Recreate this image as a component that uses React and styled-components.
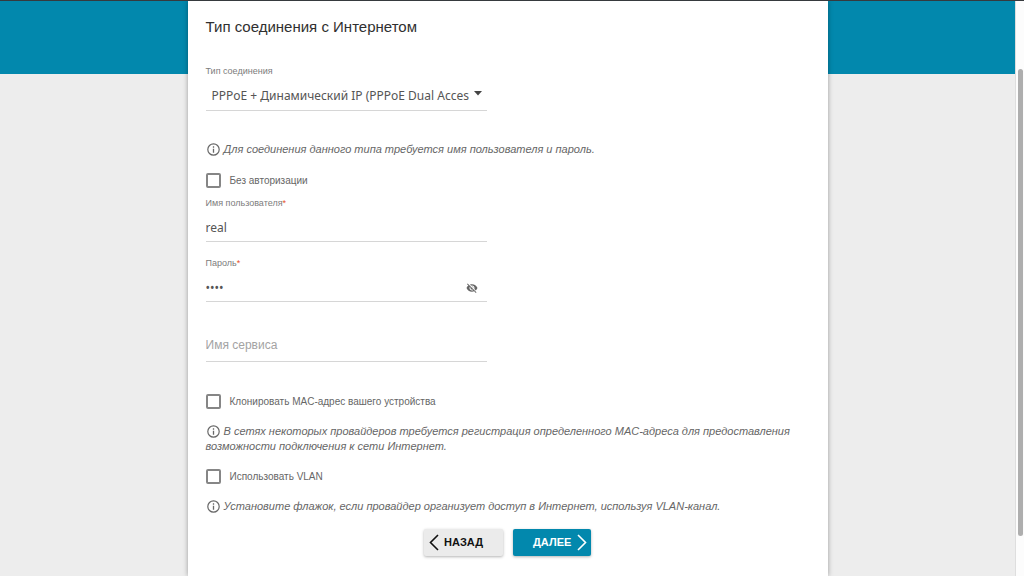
import React, { useState } from "react";
import styled, { createGlobalStyle } from "styled-components";

const teal = "#0288ad";
const sans = '"Liberation Sans", Arial, sans-serif';
const noto = '"Noto Sans", sans-serif';

const GlobalStyle = createGlobalStyle`
  *, *::before, *::after { box-sizing: border-box; }
  body { margin: 0; background: #ededed; font-family: ${sans}; color: #666; }
`;

const Shell = styled.div`
  display: flex;
  min-height: 100vh;
  border-top: 1px solid #363a3e;
`;

const Page = styled.div`
  flex: 1;
  min-width: 0;
  display: flex;
  flex-direction: column;
`;

const Banner = styled.header`
  height: 73px;
  background: ${teal};
`;

const Card = styled.main`
  flex: 1;
  width: 100%;
  max-width: 640px;
  margin: -73px auto 0;
  padding: 16px 18px 18px;
  background: #fff;
  box-shadow: 0 0 5px rgba(0, 0, 0, 0.35);
  clip-path: inset(0 -8px);
`;

const Track = styled.div`
  width: 9px;
  padding: 68px 1px 40px 2px;
  border-left: 1px solid #dedede;
  background: #fcfcfc;
  display: flex;
`;

const Thumb = styled.div`
  flex: 1;
  border-radius: 3px;
  background: #aeaeae;
`;

const Title = styled.h1`
  margin: 0 0 28px;
  font-size: 15px;
  line-height: 20px;
  font-weight: 400;
  color: #303030;
`;

const Field = styled.div`
  max-width: 281px;
  margin-top: ${(p) => p.$gap || 0}px;
`;

const Label = styled.label`
  display: block;
  height: 12px;
  font-size: 9px;
  line-height: 12px;
  color: #7c7c7c;
`;

const Required = styled.span`
  color: #e8502a;
`;

const Control = styled.div`
  display: flex;
  align-items: center;
  position: relative;
  height: ${(p) => (p.$tall ? 34 : 33)}px;
  padding-top: ${(p) => (p.$flush ? 0 : p.$tall ? 4 : 6)}px;
  border-bottom: 1px solid #d6d6d6;
`;

const Select = styled.select`
  appearance: none;
  width: 100%;
  height: 24px;
  padding: 0 18px 0 6px;
  border: 0;
  outline: 0;
  background: transparent;
  font: 12px/24px ${noto};
  color: #555;
`;

const Caret = styled.svg`
  position: absolute;
  right: 5px;
  top: 14px;
  pointer-events: none;
`;

const Input = styled.input`
  flex: 1;
  min-width: 0;
  height: 24px;
  padding: 0;
  border: 0;
  outline: 0;
  background: transparent;
  font: 12px/24px ${noto};
  color: #555;
  &::placeholder {
    font-family: ${sans};
    color: #a3a3a3;
    opacity: 1;
  }
`;

const EyeButton = styled.button`
  display: flex;
  margin: 0 9px 0 0;
  padding: 0;
  border: 0;
  background: none;
  color: #666;
`;

const Check = styled.label`
  display: flex;
  align-items: center;
  gap: 9px;
  margin-top: ${(p) => p.$gap || 15}px;
  font-size: 10px;
  line-height: 15px;
`;

const Box = styled.input`
  appearance: none;
  flex: none;
  width: 15px;
  height: 15px;
  margin: 0;
  border: 2px solid #868686;
  border-radius: 2px;
  background: #fff;
  &:checked { background: ${teal}; }
`;

const Hint = styled.p`
  margin: ${(p) => p.$gap || 15}px 0 0;
  font-size: 11px;
  line-height: 15px;
  font-style: italic;
`;

const InfoSvg = styled.svg`
  margin: 0 4px 0 1px;
  vertical-align: -3px;
`;

const Actions = styled.div`
  display: flex;
  justify-content: center;
  gap: 10px;
  margin-top: 15px;
`;

const Button = styled.button`
  display: flex;
  align-items: center;
  justify-content: space-between;
  width: ${(p) => (p.$primary ? 78 : 79)}px;
  height: 27px;
  padding: ${(p) => (p.$primary ? "0 4px 0 20px" : "0 20px 0 5px")};
  border: 0;
  border-radius: 2px;
  background: ${(p) => (p.$primary ? teal : "#ebebeb")};
  color: ${(p) => (p.$primary ? "#fff" : "#111")};
  box-shadow: 0 1px 3px rgba(0, 0, 0, 0.3);
  font: bold 11px/15px ${sans};
`;

const Info = () => (
  <InfoSvg width="13" height="13" viewBox="0 0 13 13" aria-hidden="true">
    <circle cx="6.5" cy="6.5" r="5.7" fill="none" stroke="#686868" strokeWidth="1.2" />
    <path d="M6.5 5.8v4M6.5 3.3v1.4" stroke="#686868" strokeWidth="1.3" />
  </InfoSvg>
);

const Chevron = ({ d }) => (
  <svg width="10" height="17" viewBox="0 0 10 17" fill="none" stroke="currentColor" strokeWidth="1.6" aria-hidden="true">
    <path d={d} />
  </svg>
);

const EyeOff = () => (
  <svg width="12" height="12" viewBox="0 0 24 24" fill="currentColor" aria-hidden="true">
    <path d="M12 7c2.76 0 5 2.24 5 5 0 .65-.13 1.26-.36 1.83l2.92 2.92c1.51-1.26 2.7-2.89 3.43-4.75-1.73-4.39-6-7.5-11-7.5-1.4 0-2.74.25-3.98.7l2.16 2.16C10.74 7.13 11.35 7 12 7zM2 4.27l2.28 2.28.46.46C3.08 8.3 1.78 10.02 1 12c1.73 4.39 6 7.5 11 7.5 1.55 0 3.03-.3 4.38-.84l.42.42L19.73 22 21 20.73 3.27 3 2 4.27zM7.53 9.8l1.55 1.55c-.05.21-.08.43-.08.65 0 1.66 1.34 3 3 3 .22 0 .44-.03.65-.08l1.55 1.55c-.67.33-1.41.53-2.2.53-2.76 0-5-2.24-5-5 0-.79.2-1.53.53-2.2zm4.31-.78l3.15 3.15.02-.16c0-1.66-1.34-3-3-3l-.17.01z" />
  </svg>
);

export default function App() {
  const [user, setUser] = useState("real");
  const [password, setPassword] = useState("real");
  const [visible, setVisible] = useState(false);

  return (
    <>
      <GlobalStyle />
      <Shell>
        <Page>
          <Banner />
          <Card>
            <Title>Тип соединения с Интернетом</Title>
            <Field>
              <Label htmlFor="type">Тип соединения</Label>
              <Control $tall>
                <Select id="type">
                  <option>PPPoE + Динамический IP (PPPoE Dual Access)</option>
                </Select>
                <Caret width="8" height="5" viewBox="0 0 8 5" aria-hidden="true">
                  <path d="M0 0h8L4 4.5z" fill="#444" />
                </Caret>
              </Control>
            </Field>
            <Hint $gap={31}>
              <Info />
              Для соединения данного типа требуется имя пользователя и пароль.
            </Hint>
            <Check $gap={16}>
              <Box type="checkbox" />
              Без авторизации
            </Check>
            <Field $gap={9}>
              <Label htmlFor="user">
                Имя пользователя<Required>*</Required>
              </Label>
              <Control>
                <Input id="user" value={user} onChange={(e) => setUser(e.target.value)} />
              </Control>
            </Field>
            <Field $gap={15}>
              <Label htmlFor="password">
                Пароль<Required>*</Required>
              </Label>
              <Control>
                <Input
                  id="password"
                  type={visible ? "text" : "password"}
                  value={password}
                  onChange={(e) => setPassword(e.target.value)}
                />
                <EyeButton type="button" aria-label="Показать пароль" onClick={() => setVisible(!visible)}>
                  <EyeOff />
                </EyeButton>
              </Control>
            </Field>
            <Field $gap={15}>
              <Label htmlFor="service" />
              <Control $flush>
                <Input id="service" aria-label="Имя сервиса" placeholder="Имя сервиса" />
              </Control>
            </Field>
            <Check $gap={32}>
              <Box type="checkbox" />
              Клонировать MAC-адрес вашего устройства
            </Check>
            <Hint>
              <Info />
              В сетях некоторых провайдеров требуется регистрация определенного MAC-адреса для предоставления
              возможности подключения к сети Интернет.
            </Hint>
            <Check>
              <Box type="checkbox" />
              Использовать VLAN
            </Check>
            <Hint>
              <Info />
              Установите флажок, если провайдер организует доступ в Интернет, используя VLAN-канал.
            </Hint>
            <Actions>
              <Button type="button">
                <Chevron d="M9 1L1.500 8.500L9 16" />
                НАЗАД
              </Button>
              <Button type="button" $primary>
                ДАЛЕЕ
                <Chevron d="M1 1L8.500 8.500L1 16" />
              </Button>
            </Actions>
          </Card>
        </Page>
        <Track>
          <Thumb />
        </Track>
      </Shell>
    </>
  );
}
